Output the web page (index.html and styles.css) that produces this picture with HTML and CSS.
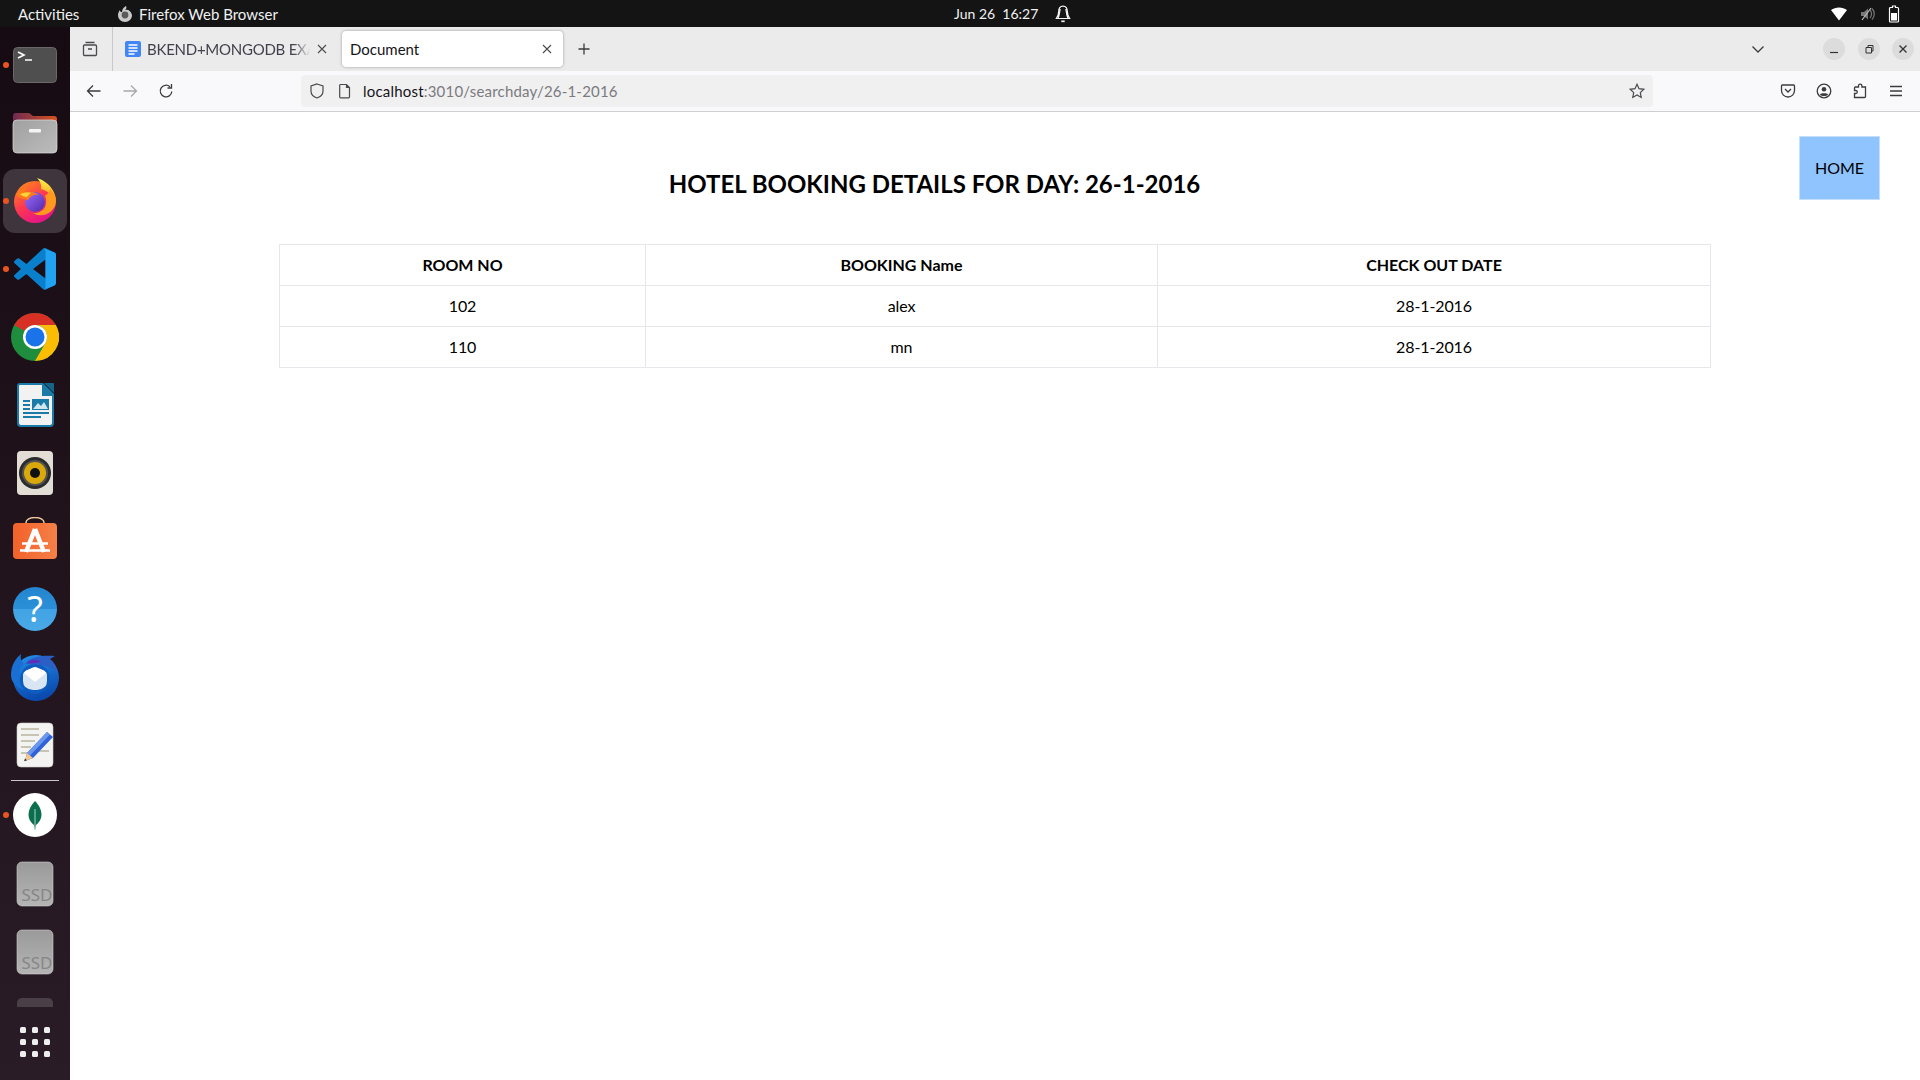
FILE: index.html
```html
<!DOCTYPE html>
<html lang="en">
<head>
<meta charset="utf-8">
<title>Document</title>
<link rel="stylesheet" href="styles.css">
</head>
<body>
<div class="desktop">
  <header class="topbar">
    <div class="top-left">
      <span class="activities">Activities</span>
      <svg class="top-ff" viewBox="0 0 16 16"><path d="M9 0c1 2 0 3-1 4 3-1 6 1 7 5 0 4-3 7-7 7s-7-3-7-7c0-2 1-4 2-5 0 2 1 2 2 2 0-3 2-5 4-6z" fill="#c9c9c9"/><circle cx="8" cy="9" r="3.4" fill="#5a5a5a"/></svg>
      <span class="appname">Firefox Web Browser</span>
    </div>
    <div class="top-center">
      <span class="clock">Jun 26&nbsp; 16:27</span>
      <svg class="bell" viewBox="0 0 16 16"><path d="M8 1C5 1 4 3.500 4 6.500c0 2.500-.8 4-2 5.500h12c-1.200-1.500-2-3-2-5.500C12 3.500 11 1 8 1zM5.500 3.500C5 6 5 9 3.500 12M10.500 3.500C11 6 11 9 12.500 12" fill="none" stroke="#f2f2f2" stroke-width="1"/><path d="M6.500 14.500h3" stroke="#f2f2f2" stroke-width="1.500"/></svg>
    </div>
    <div class="top-right">
      <svg class="tray-wifi" viewBox="0 0 16 16"><path d="M0 4c4.500-3.500 11.500-3.500 16 0L8 14.500z" fill="#fff"/></svg>
      <svg class="tray-vol" viewBox="0 0 16 16"><path d="M2 6h3l4-3.500v11L5 10H2z" fill="#777"/><path d="M11 4c2 2 2 6 0 8M13 2.500c3 3 3 8 0 11" fill="none" stroke="#777" stroke-width="1.200"/><path d="M3 14L12 2" stroke="#bbb" stroke-width="1.200"/></svg>
      <svg class="tray-bat" viewBox="0 0 12 18"><path d="M4.500 1h3v1.500h2a1 1 0 0 1 1 1V16a1 1 0 0 1-1 1h-7a1 1 0 0 1-1-1V3.500a1 1 0 0 1 1-1h2z" fill="none" stroke="#fff" stroke-width="1.200"/><rect x="3" y="8" width="6" height="7.500" fill="#fff"/></svg>
    </div>
  </header>

  <div class="workspace">
    <nav class="dock">
      <div class="dock-item has-dot">
        <svg viewBox="0 0 48 48"><rect x="2.500" y="6.500" width="43" height="35" rx="4" fill="#504f4f" stroke="#6a6868"/><path d="M7 11l6 3-6 3M14 19h7" fill="none" stroke="#fff" stroke-width="1.600"/></svg>
      </div>
      <div class="dock-item">
        <svg viewBox="0 0 48 48"><defs><linearGradient id="fb" x1="0" x2="1"><stop offset="0" stop-color="#6f2b52"/><stop offset="1" stop-color="#d8501f"/></linearGradient><linearGradient id="ff" x1="0" y1="0" x2="1" y2="1"><stop offset="0" stop-color="#a0a0a0"/><stop offset="1" stop-color="#bcbcbc"/></linearGradient></defs><path d="M2 7a3 3 0 0 1 3-3h13l4 3h21a3 3 0 0 1 3 3v15H2z" fill="url(#fb)"/><rect x="2" y="11" width="44" height="33" rx="4" fill="url(#ff)" stroke="#ddd" stroke-width=".7"/><rect x="18" y="20" width="12" height="3.500" rx="1" fill="#f4f4f4"/></svg>
      </div>
      <div class="dock-item has-dot is-active">
        <svg viewBox="0 0 48 48"><defs><linearGradient id="fxa" x1="0" y1="0" x2=".6" y2="1"><stop offset="0" stop-color="#ff980e"/><stop offset=".55" stop-color="#ff3750"/><stop offset="1" stop-color="#e31587"/></linearGradient><linearGradient id="fxb" x1="0" y1="0" x2="1" y2="1"><stop offset="0" stop-color="#9c6cff"/><stop offset="1" stop-color="#4f2aa8"/></linearGradient><linearGradient id="fxc" x1="0" y1="0" x2="0" y2="1"><stop offset="0" stop-color="#fff44f"/><stop offset="1" stop-color="#ff8a16"/></linearGradient></defs><circle cx="24" cy="25" r="21" fill="url(#fxa)"/><path d="M26 1c11 3 20 14 19 25-2-6-7-12-15-14 1-4-1-8-4-11z" fill="url(#fxc)"/><circle cx="24" cy="25" r="10" fill="url(#fxb)"/><path d="M34 19c4 9-2 18-12 17 9 6 23-1 23-12 0-5-3-9-6-12 0 3-3 5-5 7z" fill="#ff9a1f"/><path d="M5 18c3-5 7-7 11-7-1 2-2 3-2 4 4-1 11 0 14 3-6-1-9 2-11 5-4-1-8-1-12-5z" fill="#ff7a18"/><path d="M9 17c3-1 7-2 11-1-2 1-3 3-4 4-2 0-5-1-7-3z" fill="#ffd43f"/></svg>
      </div>
      <div class="dock-item has-dot">
        <svg viewBox="0 0 100 100" class="ic-code"><path d="M96.460 10.800L75.860.87a6.230 6.230 0 0 0-7.100 1.200L29.550 38.100 12.470 25.100a4.160 4.160 0 0 0-5.320.24L1.660 30.330a4.170 4.170 0 0 0 0 6.160L16.470 50 1.660 63.500a4.170 4.170 0 0 0 0 6.160l5.490 5a4.160 4.160 0 0 0 5.320.24L29.550 61.900l39.200 35.760a6.220 6.220 0 0 0 7.100 1.200l20.600-9.900A6.250 6.250 0 0 0 100 83.330V16.670a6.250 6.250 0 0 0-3.540-5.870zM75 72.700L45.250 50 75 27.300z" fill="#0a7fcc"/><path d="M71 1l25.500 9.800Q100 12.700 100 17v66q0 4.300-3.500 6.200L72 99q3-2 3-9V10q0-6-4-9z" fill="#21a3f1"/></svg>
      </div>
      <div class="dock-item">
        <svg viewBox="0 0 48 48"><circle cx="24" cy="24" r="24" fill="#1e8e3e"/><path d="M24 0a24 24 0 0 1 20.800 12H24a12 12 0 0 0-10.400 6L3.200 12A24 24 0 0 1 24 0z" fill="#d93025"/><path d="M44.800 12A24 24 0 0 1 24 48l10.400-18A12 12 0 0 0 24 12z" fill="#fbbc04"/><circle cx="24" cy="24" r="12" fill="#fff"/><circle cx="24" cy="24" r="9.500" fill="#1a73e8"/></svg>
      </div>
      <div class="dock-item">
        <svg viewBox="0 0 48 48"><path d="M9 2h23l11 11v29a4 4 0 0 1-4 4H10a4 4 0 0 1-4-4V5a3 3 0 0 1 3-3z" fill="#1a7aa8"/><path d="M9 4h22v11h10v27a2 2 0 0 1-2 2H10a2 2 0 0 1-2-2V5a1 1 0 0 1 1-1z" fill="#f2f2f2"/><path d="M33 2h9a1 1 0 0 1 1 1v9z" fill="#15648c"/><path d="M12 19h7v2h-7zM12 23h7v2h-7zM12 27h7v2h-7zM12 31h26v2H12zM12 35h18v2H12z" fill="#1a7aa8"/><rect x="21" y="18" width="17" height="11" fill="#1a7aa8"/><path d="M22 28l5-6 3 3 3-4 4 7z" fill="#cfe5f0"/></svg>
      </div>
      <div class="dock-item">
        <svg viewBox="0 0 48 48"><rect x="6" y="2" width="36" height="44" rx="4" fill="#e2ded5"/><circle cx="24" cy="24" r="16" fill="#2c2c2e"/><circle cx="24" cy="24" r="13" fill="#55534f"/><circle cx="24" cy="24" r="11" fill="#d9a90c"/><circle cx="24" cy="24" r="5" fill="#111"/></svg>
      </div>
      <div class="dock-item">
        <svg viewBox="0 0 48 48"><defs><linearGradient id="sb" x1="0" x2="1"><stop offset="0" stop-color="#f2612a"/><stop offset="1" stop-color="#f58048"/></linearGradient></defs><path d="M15 8V5.500a9 5 0 0 1 18 0V8" fill="none" stroke="#f0c9a0" stroke-width="1.500"/><rect x="2" y="6" width="44" height="36" rx="4" fill="url(#sb)"/><path d="M24 12L15 35M24 12l9 23" fill="none" stroke="#fff" stroke-width="4.500"/><path d="M11 26.500h26M9 33.500h30" stroke="#fff" stroke-width="2.500"/></svg>
      </div>
      <div class="dock-item">
        <svg viewBox="0 0 48 48"><defs><linearGradient id="hb" x1="0" y1="0" x2="0" y2="1"><stop offset="0" stop-color="#2485cf"/><stop offset=".5" stop-color="#2b8fd8"/><stop offset=".5" stop-color="#41a3e4"/><stop offset="1" stop-color="#4aaae8"/></linearGradient></defs><circle cx="24" cy="24" r="22" fill="url(#hb)"/><text x="24" y="37" class="help-mark">?</text></svg>
      </div>
      <div class="dock-item">
        <svg viewBox="0 0 48 48"><defs><linearGradient id="tb" x1="0" y1="0" x2=".3" y2="1"><stop offset="0" stop-color="#2391ea"/><stop offset="1" stop-color="#0b4bb0"/></linearGradient></defs><circle cx="25" cy="25" r="23" fill="url(#tb)"/><path d="M0 22C0 12 5 5 10 1c-1 4 0 7 3 10-3 3-6 7-5 14 0 5 2 9 5 12C5 34 0 29 0 22z" fill="#1a6fd4"/><circle cx="24" cy="26" r="15" fill="#0f5cc0"/><path d="M14 11C20 3 32 2 44 3l-5 3c4 3 7 8 8 14-6-6-14-9-33-9z" fill="#2b5fc6"/><path d="M16 10c4-4 10-4 14-1-5 1-10 2-14 1z" fill="#5a2dbd"/><path d="M12 22q0-3 3-4l7-3q2-1 4 0l7 3q3 1 3 4v6q0 8-10 9h-4q-10-1-10-9z" fill="#d9e5f2"/><path d="M13 20l11 9 11-9q-1-2-2-2.500l-7-3q-2-1-4 0l-7 3q-1 .5-2 2.500z" fill="#fff"/></svg>
      </div>
      <div class="dock-item">
        <svg viewBox="0 0 48 48"><rect x="6" y="2" width="36" height="44" rx="4" fill="#f3f3f1" stroke="#cfcfcb" stroke-width=".6"/><path d="M10 8h18M10 14h18M10 20h14M10 26h10M10 32h8M28 30h10" stroke="#c7c4b4" stroke-width="2"/><path d="M36 11l6 5-20 21-8 3 2-8z" fill="#2f63d6"/><path d="M36 11l3 2.500-20 21-3-2.500z" fill="#6c97ee"/><path d="M16 32l6 5-8 3z" fill="#f3c78b"/><path d="M14 37.500l2 1.700-3 1z" fill="#333"/></svg>
      </div>
      <div class="dock-sep"></div>
      <div class="dock-item has-dot">
        <svg viewBox="0 0 48 48"><circle cx="24" cy="24" r="22" fill="#fff"/><path d="M24 10c4 4 6.500 9 6.500 13.500 0 5-3 8.500-5.500 10.500l-1 5-1-5c-2.500-2-5.500-5.500-5.500-10.500C17.500 19 20 14 24 10z" fill="#0b6e4f"/><path d="M24 18v21" stroke="#a8d5c2" stroke-width="1"/></svg>
      </div>
      <div class="dock-item">
        <svg viewBox="0 0 48 48"><defs><linearGradient id="sd" x1="0" y1="0" x2="0" y2="1"><stop offset="0" stop-color="#9a9a9a"/><stop offset="1" stop-color="#b5b5b5"/></linearGradient></defs><rect x="6" y="2" width="36" height="44" rx="5" fill="url(#sd)" stroke="#cfcfcf" stroke-width=".6"/><text x="41.500" y="41" class="ssd-mark">SSD</text></svg>
      </div>
      <div class="dock-item">
        <svg viewBox="0 0 48 48"><rect x="6" y="2" width="36" height="44" rx="5" fill="url(#sd)" stroke="#cfcfcf" stroke-width=".6"/><text x="41.500" y="41" class="ssd-mark">SSD</text></svg>
      </div>
      <div class="dock-partial"></div>
      <div class="dock-apps">
        <i></i><i></i><i></i><i></i><i></i><i></i><i></i><i></i><i></i>
      </div>
    </nav>

    <main class="browser">
      <div class="tabbar">
        <div class="tab-manager">
          <svg class="ic" viewBox="0 0 16 16"><path d="M3.500 1.500h9M1.500 5a1 1 0 0 1 1-1h11a1 1 0 0 1 1 1v8.500a1 1 0 0 1-1 1h-11a1 1 0 0 1-1-1zM6 8h4" fill="none" stroke="#4a4a4f" stroke-width="1.300"/></svg>
        </div>
        <div class="tab">
          <svg class="tab-doc" viewBox="0 0 16 16"><rect x="0" y="0" width="16" height="16" rx="2" fill="#4285f4"/><path d="M3.500 4h9M3.500 7h9M3.500 10h9M3.500 13h6" stroke="#fff" stroke-width="1.500"/></svg>
          <span class="tab-title fade">BKEND+MONGODB EXAM</span>
          <svg class="tab-x" viewBox="0 0 12 12"><path d="M2 2l8 8M10 2l-8 8" stroke="#4a4a4f" stroke-width="1.100"/></svg>
        </div>
        <div class="tab tab-current">
          <span class="tab-title">Document</span>
          <svg class="tab-x" viewBox="0 0 12 12"><path d="M2 2l8 8M10 2l-8 8" stroke="#4a4a4f" stroke-width="1.100"/></svg>
        </div>
        <div class="newtab">
          <svg class="ic" viewBox="0 0 16 16"><path d="M8 2.500v11M2.500 8h11" stroke="#3c3c40" stroke-width="1.300"/></svg>
        </div>
        <div class="tab-spacer"></div>
        <svg class="ic chevron" viewBox="0 0 16 16"><path d="M2.500 5.500L8 11l5.500-5.500" fill="none" stroke="#3c3c40" stroke-width="1.300"/></svg>
        <div class="winbtns">
          <span class="winbtn"><svg viewBox="0 0 12 12"><path d="M2 9.500h8" stroke="#333" stroke-width="1.200"/></svg></span>
          <span class="winbtn"><svg viewBox="0 0 12 12"><path d="M3 4.500h5.500V10H3zM5 4.500V2.500h5V8H8.500" fill="none" stroke="#333" stroke-width="1"/></svg></span>
          <span class="winbtn"><svg viewBox="0 0 12 12"><path d="M2.500 2.500l7 7M9.500 2.500l-7 7" stroke="#333" stroke-width="1.300"/></svg></span>
        </div>
      </div>

      <div class="navbar">
        <div class="navbtn"><svg class="ic" viewBox="0 0 16 16"><path d="M14.500 8h-13M7 2.500L1.500 8 7 13.500" fill="none" stroke="#3c3c40" stroke-width="1.300"/></svg></div>
        <div class="navbtn"><svg class="ic" viewBox="0 0 16 16"><path d="M1.500 8h13M9 2.500L14.500 8 9 13.500" fill="none" stroke="#a8a8ab" stroke-width="1.300"/></svg></div>
        <div class="navbtn"><svg class="ic" viewBox="0 0 16 16"><path d="M13.800 8.500A5.800 5.800 0 1 1 12 3.800M13.500 1v4h-4" fill="none" stroke="#3c3c40" stroke-width="1.300"/></svg></div>
        <div class="urlbar">
          <svg class="ic" viewBox="0 0 16 16"><path d="M8 1l6 2v5c0 3.500-3 6-6 7-3-1-6-3.500-6-7V3z" fill="none" stroke="#4a4a4f" stroke-width="1.200"/></svg>
          <svg class="ic url-page" viewBox="0 0 16 16"><path d="M3.500 1.500h6l3 3V14a.8.8 0 0 1-.8.8H3.500a.8.8 0 0 1-.8-.8V2.300a.8.8 0 0 1 .8-.8zM9.500 1.500v3h3" fill="none" stroke="#4a4a4f" stroke-width="1.200"/></svg>
          <span class="url"><span class="url-host">localhost</span>:3010/searchday/26-1-2016</span>
          <svg class="ic url-star" viewBox="0 0 16 16"><path d="M8 1.300l2 4.400 4.800.6-3.500 3.300.9 4.800L8 12l-4.200 2.400.9-4.800L1.200 6.300 6 5.700z" fill="none" stroke="#4a4a4f" stroke-width="1.200"/></svg>
        </div>
        <div class="toolbar">
          <div class="navbtn"><svg class="ic" viewBox="0 0 16 16"><path d="M2.500 2h11a1 1 0 0 1 1 1v4.500a6.500 6.500 0 0 1-13 0V3a1 1 0 0 1 1-1zM5 6l3 3 3-3" fill="none" stroke="#3c3c40" stroke-width="1.300"/></svg></div>
          <div class="navbtn"><svg class="ic" viewBox="0 0 16 16"><circle cx="8" cy="8" r="6.800" fill="none" stroke="#3c3c40" stroke-width="1.300"/><circle cx="8" cy="6.300" r="2.300" fill="#3c3c40"/><path d="M3.800 11.500c1-1.800 7.400-1.800 8.400 0-2 2-6.400 2-8.400 0z" fill="#3c3c40"/></svg></div>
          <div class="navbtn"><svg class="ic" viewBox="0 0 16 16"><path d="M6.500 4V2.800a1.700 1.700 0 0 1 3.400 0V4h3.600v9.500a1 1 0 0 1-1 1H2.500v-4h1.300a1.500 1.500 0 0 0 0-3H2.500V5a1 1 0 0 1 1-1z" fill="none" stroke="#3c3c40" stroke-width="1.300"/></svg></div>
          <div class="navbtn"><svg class="ic" viewBox="0 0 16 16"><path d="M2 3.500h12M2 8h12M2 12.500h12" stroke="#3c3c40" stroke-width="1.300"/></svg></div>
        </div>
      </div>

      <section class="page">
        <div class="page-head">
          <h1 class="title">HOTEL BOOKING DETAILS FOR DAY: 26-1-2016</h1>
          <a class="home" href="#">HOME</a>
        </div>
        <table class="bookings">
          <colgroup><col class="c1"><col class="c2"><col class="c3"></colgroup>
          <thead>
            <tr><th>ROOM NO</th><th>BOOKING Name</th><th>CHECK OUT DATE</th></tr>
          </thead>
          <tbody>
            <tr><td>102</td><td>alex</td><td>28-1-2016</td></tr>
            <tr><td>110</td><td>mn</td><td>28-1-2016</td></tr>
          </tbody>
        </table>
      </section>
    </main>
  </div>
</div>
</body>
</html>
```

FILE: styles.css
```css
* { box-sizing: border-box; }
html, body { margin: 0; height: 100%; }
body { font-family: "Lato", "Noto Sans", sans-serif; color: #000; background: #fff; }
.desktop { display: flex; flex-direction: column; height: 100vh; overflow: hidden; }

.topbar { height: 27px; flex: none; display: flex; align-items: center; background: #141414; color: #f0f0f0; font-size: 15px; }
.top-left { flex: 0 0 954px; display: flex; align-items: center; padding-left: 18px; }
.activities { width: 92px; }
.top-ff { width: 16px; height: 16px; margin: 0 6px 0 7px; }
.clock { font-size: 14px; }
.top-center { display: flex; align-items: center; }
.bell { width: 18px; height: 18px; margin-left: 16px; }
.top-right { margin-left: auto; display: flex; align-items: center; padding-right: 20px; }
.tray-wifi { width: 16px; height: 16px; }
.tray-vol { width: 16px; height: 16px; margin-left: 12px; }
.tray-bat { width: 12px; height: 18px; margin-left: 13px; }

.workspace { flex: 1; display: flex; min-height: 0; }
.dock { flex: 0 0 70px; display: flex; flex-direction: column; padding-top: 4px; background: linear-gradient(#170b13, #2a1c26); }
.dock-item { position: relative; flex: none; height: 68px; display: flex; align-items: center; justify-content: center; }
.dock-item svg { width: 48px; height: 48px; }
.dock-item .ic-code { width: 42px; height: 42px; }
.has-dot::before { content: ""; position: absolute; left: 3px; top: 31px; width: 6px; height: 6px; border-radius: 50%; background: #e95420; }
.is-active { margin: 0 3px; }
.is-active::after { content: ""; position: absolute; inset: 2px 0; border-radius: 12px; background: #3f353d; }
.is-active svg { position: relative; z-index: 1; }
.is-active.has-dot::before { left: 0; z-index: 1; }
.dock-sep { flex: none; height: 1px; margin: 1px 11px 0; background: #c9c5c8; }
.dock-sep + .dock-item { margin-bottom: 1px; }
.dock-partial { flex: none; height: 9px; width: 36px; margin: 12px 0 0 17px; border-radius: 5px 5px 0 0; background: #4a3f47; }
.dock-apps { display: grid; grid-template-columns: repeat(3, 6px); gap: 6px; justify-content: center; margin-top: 20px; }
.dock-apps i { width: 6px; height: 6px; border-radius: 1.500px; background: #eeeeee; }
.help-mark { font-family: "Noto Sans", sans-serif; font-size: 36px; fill: #fff; text-anchor: middle; }
.ssd-mark { font-family: "Noto Sans", sans-serif; font-size: 17px; fill: #868686; text-anchor: end; }

.browser { flex: 1; min-width: 0; display: flex; flex-direction: column; background: #fff; }
.ic { width: 16px; height: 16px; flex: none; }

.tabbar { flex: none; height: 44px; display: flex; align-items: center; background: #ebebeb; font-size: 15px; color: #2b2a33; }
.tab-manager { flex: 0 0 43px; height: 100%; display: flex; align-items: center; justify-content: center; padding-right: 2px; border-right: 1px solid #c8c8c8; }
.tab { flex: 0 0 229px; min-width: 0; height: 36px; display: flex; align-items: center; padding-left: 12px; color: #42414d; }
.tab-doc { width: 16px; height: 16px; flex: none; margin-right: 6px; }
.tab-title { flex: 1; min-width: 0; overflow: hidden; white-space: nowrap; }
.fade { letter-spacing: -.25px; -webkit-mask-image: linear-gradient(90deg, #000 90%, transparent); mask-image: linear-gradient(90deg, #000 90%, transparent); }
.tab-x { width: 12px; height: 12px; flex: none; margin-left: 6px; margin-right: 14px; }
.tab-current { flex-basis: 221px; padding-left: 8px; background: #fff; border-radius: 4px; box-shadow: 0 0 3px rgba(0,0,0,.35); color: #15141a; }
.tab-current .tab-x { margin-right: 10px; }
.newtab { flex: 0 0 42px; display: flex; justify-content: center; }
.tab-spacer { flex: 1; }
.chevron { margin-right: 57px; }
.winbtns { display: flex; gap: 12.500px; padding-right: 6px; }
.winbtn { width: 22px; height: 22px; border-radius: 50%; background: #dcdcdc; display: flex; align-items: center; justify-content: center; }
.winbtn svg { width: 12px; height: 12px; }

.navbar { flex: none; height: 41px; display: flex; align-items: center; padding: 0 0 1px 6px; background: #f9f9fb; border-bottom: 1px solid #cfcfd0; }
.navbtn { flex: 0 0 36px; height: 32px; display: flex; align-items: center; justify-content: center; }
.urlbar { flex: 1; min-width: 0; height: 32px; display: flex; align-items: center; padding: 0 8px; background: #f0f0f0; border-radius: 4px; font-size: 15px; }
.navbtn + .urlbar { margin-left: 117px; }
.url-page { margin-left: 12px; }
.url { flex: 1; margin-left: 10px; color: #7b7b80; white-space: nowrap; letter-spacing: .2px; }
.url-host { color: #15141a; }
.toolbar { display: flex; margin-left: 117px; padding-right: 6px; }

.page { flex: 1; min-height: 0; }
.page-head { display: flex; align-items: flex-start; padding: 24px 40px 0 0; }
.title { flex: 1; margin: 32px 0 0; font-size: 24px; line-height: 32px; font-weight: 700; text-align: center; }
.home { flex: 0 0 81px; height: 64px; display: flex; align-items: center; justify-content: center; padding-bottom: 2px; background: #90c4ff; border: 1px solid #c5e0ff; color: #000; font-size: 16px; text-decoration: none; }
.bookings { width: 1431px; margin: 44px auto 0; border-collapse: collapse; table-layout: fixed; font-size: 16px; }
.c1 { width: 366px; }
.c2 { width: 512px; }
.c3 { width: 553px; }
.bookings th, .bookings td { height: 41px; padding: 0 0 2px; border: 1px solid #e5e7eb; text-align: center; }
.bookings th { font-weight: 700; }
.bookings td { letter-spacing: -.1px; }
```
